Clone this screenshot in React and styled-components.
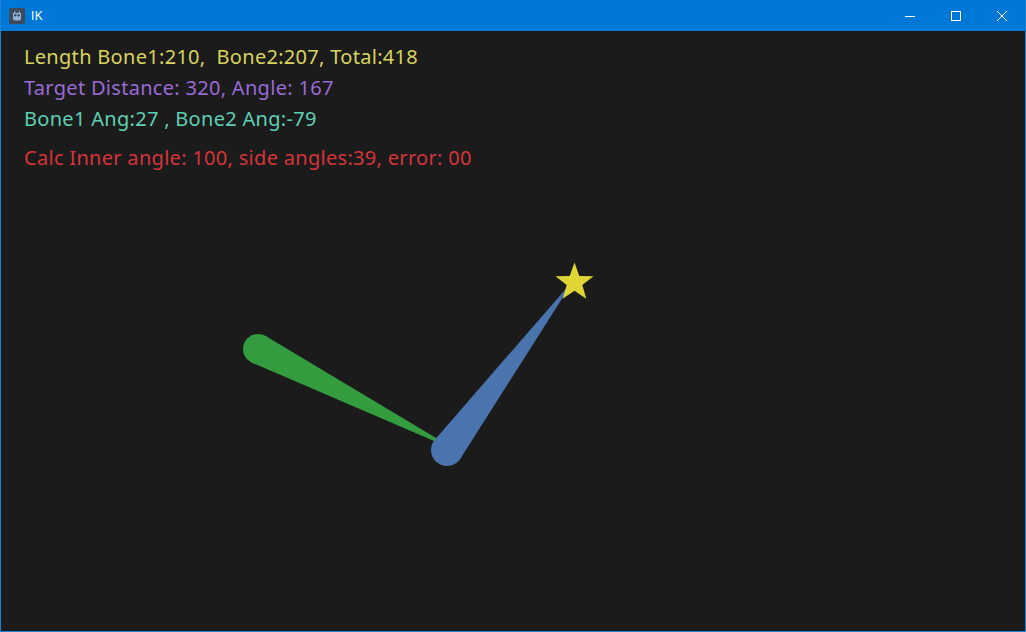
import React from 'react';
import styled, { createGlobalStyle } from 'styled-components';

const Global = createGlobalStyle`
  html, body { margin: 0; padding: 0; background: #1b1b1b; }
  #root { width: 1026px; height: 632px; }
`;

const Window = styled.div`
  width: 1026px;
  height: 632px;
  box-sizing: border-box;
  display: flex;
  flex-direction: column;
  border: 1px solid #1883d7;
  border-top: none;
  background: #1b1b1b;
`;

const TitleBar = styled.div`
  height: 31px;
  flex: none;
  display: flex;
  align-items: center;
  background: #0078d7;
  color: #fff;
  font-family: 'Liberation Sans', Arial, sans-serif;
  font-size: 12px;
`;

const AppIcon = styled.div`
  width: 16px;
  height: 16px;
  margin: 0 6px 0 8px;
  border-radius: 2px;
  background: #3d4a5a;
  display: flex;
  align-items: center;
  justify-content: center;
`;

const Title = styled.span`
  flex: 1;
  letter-spacing: 0.5px;
`;

const WinButton = styled.div`
  width: 46px;
  height: 31px;
  display: flex;
  align-items: center;
  justify-content: center;
`;

const Viewport = styled.div`
  flex: 1;
  position: relative;
  background: #1b1b1b;
  padding: 10px 0 0 23px;
  font-family: 'Noto Sans', 'DejaVu Sans', sans-serif;
  font-size: 20px;
  letter-spacing: 0.3px;
`;

const Canvas = styled.svg`
  position: absolute;
  inset: 0;
  width: 100%;
  height: 100%;
`;

const Line = styled.div`
  position: relative;
  line-height: 31px;
  white-space: pre;
  color: ${({ color }) => color};
  margin-top: ${({ gap }) => gap || 0}px;
`;

// tapered bone: round head at (x1,y1) with radius r, narrowing to width w at (x2,y2)
function bone(x1, y1, r, x2, y2, w) {
  const dx = x2 - x1, dy = y2 - y1;
  const len = Math.hypot(dx, dy);
  const nx = -dy / len, ny = dx / len;
  const p = (x, y) => `${x.toFixed(1)},${y.toFixed(1)}`;
  return `M${p(x1 + nx * r, y1 + ny * r)} L${p(x2 + nx * w, y2 + ny * w)} L${p(x2 - nx * w, y2 - ny * w)} L${p(x1 - nx * r, y1 - ny * r)} Z`;
}

function star(cx, cy, R, r) {
  const pts = [];
  for (let i = 0; i < 10; i++) {
    const a = -Math.PI / 2 + (i * Math.PI) / 5;
    const rad = i % 2 === 0 ? R : r;
    pts.push(`${(cx + rad * Math.cos(a)).toFixed(1)},${(cy + rad * Math.sin(a)).toFixed(1)}`);
  }
  return pts.join(' ');
}

const App = () => {
  return (
    <>
      <Global />
      <Window>
        <TitleBar>
          <AppIcon>
            <svg width="12" height="12" viewBox="0 0 12 12">
              <path d="M2 3h8v5.5c0 1-1 2-2 2H4c-1 0-2-1-2-2z" fill="#8fb4d8" />
              <circle cx="4.3" cy="5.3" r="1.2" fill="#3d4a5a" />
              <circle cx="7.7" cy="5.3" r="1.2" fill="#3d4a5a" />
              <rect x="3" y="1.5" width="1.4" height="1.6" fill="#8fb4d8" />
              <rect x="7.6" y="1.5" width="1.4" height="1.6" fill="#8fb4d8" />
            </svg>
          </AppIcon>
          <Title>IK</Title>
          <WinButton>
            <svg width="10" height="10" viewBox="0 0 10 10"><path d="M0 5.5h10" stroke="#fff" strokeWidth="1" /></svg>
          </WinButton>
          <WinButton>
            <svg width="10" height="10" viewBox="0 0 10 10"><rect x="0.5" y="0.5" width="9" height="9" fill="none" stroke="#fff" strokeWidth="1" /></svg>
          </WinButton>
          <WinButton>
            <svg width="10" height="10" viewBox="0 0 10 10"><path d="M0 0L10 10M10 0L0 10" stroke="#fff" strokeWidth="1" /></svg>
          </WinButton>
        </TitleBar>
        <Viewport>
          <Canvas>
            <g transform="translate(-1,-31)">
              <circle cx="258" cy="349" r="15" fill="#339c3f" />
              <path d={bone(258, 349, 15, 440, 442, 1.5)} fill="#339c3f" />
              <circle cx="447" cy="450" r="16" fill="#4a74ae" />
              <path d={bone(447, 450, 16, 567, 289, 1)} fill="#4a74ae" />
              <polygon points={star(574.5, 282.5, 20, 8.2)} fill="#dfd636" />
            </g>
          </Canvas>
          <Line color="#d9d45d">Length Bone1:210,  Bone2:207, Total:418</Line>
          <Line color="#9a6ad6">Target Distance: 320, Angle: 167</Line>
          <Line color="#5ecfb4">Bone1 Ang:27 , Bone2 Ang:-79</Line>
          <Line color="#d7343a" gap={8}>Calc Inner angle: 100, side angles:39, error: 00</Line>
        </Viewport>
      </Window>
    </>
  );
};

export default App;
